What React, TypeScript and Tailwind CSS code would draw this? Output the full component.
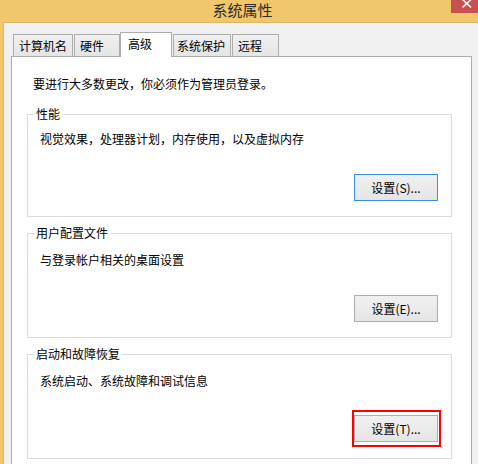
import React from "react";

const font = { fontFamily: '"Noto Sans CJK SC", "Noto Sans", sans-serif' };

type Tab = { label: string; w: string; pl: string; active?: boolean };

const tabs: Tab[] = [
  { label: "计算机名", w: "w-[60px]", pl: "pl-[5px]" },
  { label: "硬件", w: "w-[46px]", pl: "pl-[5px]" },
  { label: "高级", w: "w-[52px]", pl: "pl-[7px]", active: true },
  { label: "系统保护", w: "w-[58px]", pl: "pl-[3px]" },
  { label: "远程", w: "w-[47px]", pl: "pl-[5px]" },
];

function Button({ label, focused, mark }: { label: string; focused?: boolean; mark?: boolean }) {
  return (
    <div
      className={
        "relative w-[84px] h-[27px] flex items-center justify-center text-[12px] leading-[16px] text-black border bg-gradient-to-b from-[#f0f0f0] to-[#e5e5e5] " +
        (focused ? "border-[#3c8fe6]" : "border-[#acacac]")
      }
    >
      {label}
      {mark && (
        <span className="absolute left-[-3px] right-[-4px] top-[-6px] bottom-[-6px] border-2 border-[#ff0000]" />
      )}
    </div>
  );
}

function Group({
  title,
  text,
  button,
  textMt,
  btnMt,
  btnMb,
  groupMt,
  focused,
  mark,
}: {
  title: string;
  text: string;
  button: string;
  textMt: string;
  btnMt: string;
  btnMb: string;
  groupMt: string;
  focused?: boolean;
  mark?: boolean;
}) {
  return (
    <fieldset className={"w-[425px] border border-[#dcdcdc] " + groupMt}>
      <legend className="ml-[6px] px-[2px] text-[12px] leading-[16px] text-black">{title}</legend>
      <div className="flex flex-col">
        <p className={"ml-[12px] text-[12px] leading-[16px] text-black " + textMt}>{text}</p>
        <div className={"self-end mr-[13px] " + btnMt + " " + btnMb}>
          <Button label={button} focused={focused} mark={mark} />
        </div>
      </div>
    </fieldset>
  );
}

export default function App() {
  return (
    <div className="w-[478px] h-[464px] overflow-hidden bg-[#f0c86b] flex flex-col" style={font}>
      {/* title bar */}
      <div className="h-[22px] flex shrink-0">
        <div className="flex-1 flex justify-center items-center pl-[34px] pb-[3px]">
          <span className="text-[15px] leading-[19px] text-[#2b2b2b]">系统属性</span>
        </div>
        <div className="w-[27px] h-[13px] bg-[#c75050]">
          <svg width="27" height="13" viewBox="0 0 27 13">
            <path d="M11.5 -0.5 L20 7.5 M20 -0.5 L11.5 7.5" stroke="#ffffff" strokeWidth="1.6" fill="none" />
          </svg>
        </div>
      </div>

      {/* body */}
      <div className="flex-1 ml-[3px] bg-[#f0f0f0] border-l border-t border-[#d8b869] pt-[9px]">
        <div className="ml-[7px] w-[461px] flex flex-col">
          {/* tabs */}
          <div className="flex items-end ml-[2px] h-[24px] relative z-10">
            {tabs.map((t) =>
              t.active ? (
                <div
                  key={t.label}
                  className={
                    "h-[25px] -mb-px bg-white border-t border-l border-r border-[#acacac] text-[12px] leading-[16px] text-black pt-[3px] " +
                    t.w +
                    " " +
                    t.pl
                  }
                >
                  {t.label}
                </div>
              ) : (
                <div
                  key={t.label}
                  className={
                    "h-[22px] ml-px first:ml-0 bg-gradient-to-b from-[#f0f0f0] to-[#e5e5e5] border-t border-l border-r border-[#acacac] text-[12px] leading-[16px] text-black flex items-center " +
                    t.w +
                    " " +
                    t.pl
                  }
                >
                  {t.label}
                </div>
              )
            )}
          </div>

          {/* panel */}
          <div className="h-[420px] bg-white border border-[#acacac] flex flex-col">
            <p className="pt-[19px] pl-[21px] text-[12px] leading-[16px] text-black">
              要进行大多数更改，你必须作为管理员登录。
            </p>
            <div className="ml-[15px] flex flex-col">
              <Group
                title="性能"
                text="视觉效果，处理器计划，内存使用，以及虚拟内存"
                button="设置(S)..."
                groupMt="mt-[14px]"
                textMt="mt-[9px]"
                btnMt="mt-[27px]"
                btnMb="mb-[15px]"
                focused
              />
              <Group
                title="用户配置文件"
                text="与登录帐户相关的桌面设置"
                button="设置(E)..."
                groupMt="mt-[8px]"
                textMt="mt-[11px]"
                btnMt="mt-[27px]"
                btnMb="mb-[15px]"
              />
              <Group
                title="启动和故障恢复"
                text="系统启动、系统故障和调试信息"
                button="设置(T)..."
                groupMt="mt-[8px]"
                textMt="mt-[11px]"
                btnMt="mt-[26px]"
                btnMb="mb-[16px]"
                mark
              />
            </div>
          </div>
        </div>
      </div>
    </div>
  );
}
